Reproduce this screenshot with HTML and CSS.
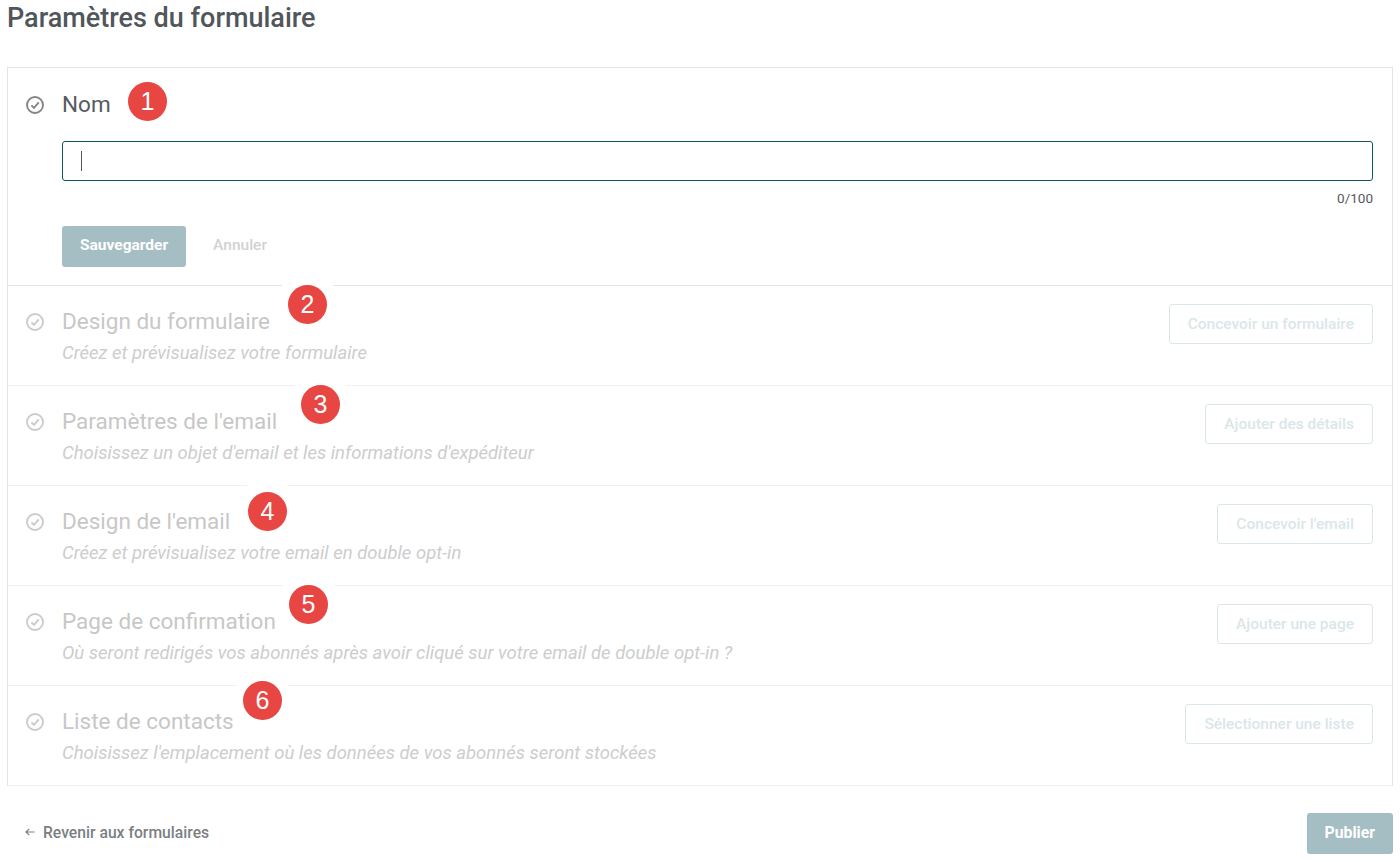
FILE: index.html
```html
<!DOCTYPE html>
<html lang="fr">
<head>
    <meta charset="UTF-8">
    <meta name="viewport" content="width=device-width, initial-scale=1.0">
    <title>Paramètres du formulaire</title>
    <link rel="stylesheet" href="styles.css">
</head>
<body>
    <h1 class="page-title">Paramètres du formulaire</h1>

    <div class="panel">
        <!-- Section ouverte -->
        <div class="section section-open">
            <div class="section-head">
                <svg class="check" viewBox="0 0 18 18"><circle cx="9" cy="9" r="8"/><path d="M5.4 9.3l2.6 2.6 4.8-5.6"/></svg>
                <h2 class="section-title">Nom</h2>
            </div>
            <div class="field">
                <div class="input"><span class="caret"></span></div>
                <div class="counter">0/100</div>
            </div>
            <div class="actions">
                <button class="button button-primary">Sauvegarder</button>
                <button class="button button-link">Annuler</button>
            </div>
            <span class="badge badge-1"><span class="badge-dot">1</span></span>
        </div>

        <!-- Sections inactives -->
        <div class="section section-off">
            <svg class="check" viewBox="0 0 18 18"><circle cx="9" cy="9" r="8"/><path d="M5.4 9.3l2.6 2.6 4.8-5.6"/></svg>
            <div class="section-text">
                <h2 class="section-title">Design du formulaire</h2>
                <p class="section-sub">Créez et prévisualisez votre formulaire</p>
            </div>
            <button class="button button-outline">Concevoir un formulaire</button>
            <span class="badge badge-2"><span class="badge-dot">2</span></span>
        </div>
        <div class="section section-off">
            <svg class="check" viewBox="0 0 18 18"><circle cx="9" cy="9" r="8"/><path d="M5.4 9.3l2.6 2.6 4.8-5.6"/></svg>
            <div class="section-text">
                <h2 class="section-title">Paramètres de l'email</h2>
                <p class="section-sub">Choisissez un objet d'email et les informations d'expéditeur</p>
            </div>
            <button class="button button-outline">Ajouter des détails</button>
            <span class="badge badge-3"><span class="badge-dot">3</span></span>
        </div>
        <div class="section section-off">
            <svg class="check" viewBox="0 0 18 18"><circle cx="9" cy="9" r="8"/><path d="M5.4 9.3l2.6 2.6 4.8-5.6"/></svg>
            <div class="section-text">
                <h2 class="section-title">Design de l'email</h2>
                <p class="section-sub">Créez et prévisualisez votre email en double opt-in</p>
            </div>
            <button class="button button-outline">Concevoir l'email</button>
            <span class="badge badge-4"><span class="badge-dot">4</span></span>
        </div>
        <div class="section section-off">
            <svg class="check" viewBox="0 0 18 18"><circle cx="9" cy="9" r="8"/><path d="M5.4 9.3l2.6 2.6 4.8-5.6"/></svg>
            <div class="section-text">
                <h2 class="section-title">Page de confirmation</h2>
                <p class="section-sub">Où seront redirigés vos abonnés après avoir cliqué sur votre email de double opt-in ?</p>
            </div>
            <button class="button button-outline">Ajouter une page</button>
            <span class="badge badge-5"><span class="badge-dot">5</span></span>
        </div>
        <div class="section section-off">
            <svg class="check" viewBox="0 0 18 18"><circle cx="9" cy="9" r="8"/><path d="M5.4 9.3l2.6 2.6 4.8-5.6"/></svg>
            <div class="section-text">
                <h2 class="section-title">Liste de contacts</h2>
                <p class="section-sub">Choisissez l'emplacement où les données de vos abonnés seront stockées</p>
            </div>
            <button class="button button-outline">Sélectionner une liste</button>
            <span class="badge badge-6"><span class="badge-dot">6</span></span>
        </div>
    </div>

    <div class="footer">
        <a class="back-link">
            <svg class="back-arrow" viewBox="0 0 10 10"><path d="M9.5 5H1M4.2 1.9L1 5l3.2 3.1"/></svg>
            Revenir aux formulaires
        </a>
        <button class="button button-primary">Publier</button>
    </div>
</body>
</html>
```

FILE: styles.css
```css
* {
    box-sizing: border-box;
}
body {
    margin: 0;
    padding: 0 7px;
    font-family: Roboto, "Liberation Sans", sans-serif;
    color: #51565a;
    background-color: #fff;
}
.page-title {
    margin: 0;
    height: 67px;
    padding-top: 1px;
    font-size: 27px;
    line-height: 34px;
    font-weight: 500;
    color: #50565a;
}
.panel {
    border: 1px solid #e4e4e4;
    border-bottom: none;
}
.section {
    position: relative;
    border-bottom: 1px solid #e8e8e8;
}
.section-open {
    height: 218px;
    padding: 18px 19px 0 18px;
    border-bottom-color: #e4e4e4;
}
.section-off {
    display: flex;
    align-items: flex-start;
    height: 100px;
    padding: 17px 19px 0 18px;
    border-bottom-color: #f0f0f0;
}
.section-head {
    display: flex;
    align-items: center;
    height: 36px;
}
.check {
    flex: none;
    width: 18px;
    height: 18px;
    margin: 1px 18px 0 0;
    fill: none;
    stroke: #858585;
    stroke-width: 1.9;
}
.section-off .check {
    margin-top: 10px;
    stroke: #cbcbcb;
}
.section-title {
    margin: 0;
    font-size: 22.5px;
    line-height: 36px;
    font-weight: 400;
    color: #575b5e;
}
.section-off .section-title {
    color: #c7c7c7;
}
.section-text {
    flex: 1;
}
.section-sub {
    margin: 1px 0 0;
    font-size: 18.5px;
    line-height: 26px;
    font-style: italic;
    color: #cdcdcd;
}
.section-off .button-outline {
    margin-top: 1px;
}
.field {
    margin: 19px 0 0 36px;
}
.input {
    height: 40px;
    padding: 9px 18px;
    border: 1px solid #12565f;
    border-radius: 3px;
}
.caret {
    display: block;
    width: 1px;
    height: 20px;
    background-color: #51565a;
}
.counter {
    margin-top: 9px;
    font-size: 13.5px;
    line-height: 16px;
    text-align: right;
    color: #55595c;
}
.actions {
    display: flex;
    align-items: center;
    margin: 20px 0 0 36px;
}
.button {
    height: 41px;
    padding: 0 18px 3px;
    border: none;
    border-radius: 3px;
    font-family: inherit;
    font-size: 15.5px;
    font-weight: 500;
    background: none;
    cursor: pointer;
}
.button-primary {
    background-color: #a5bec3;
    color: #fff;
    font-weight: 700;
}
.button-link {
    margin-left: 9px;
    color: #d2d2d2;
}
.button-outline {
    flex: none;
    height: 40px;
    padding-bottom: 0;
    border: 1px solid #dbe6e8;
    color: #dbe6e8;
}

/* Pastilles numerotees, par-dessus le contenu, sur un fond blanc qui coupe les lignes */
.badge {
    position: absolute;
    display: flex;
    align-items: center;
    justify-content: center;
    width: 51px;
    height: 53px;
    border-radius: 8px;
    background-color: #fff;
}
.badge-dot {
    display: flex;
    align-items: center;
    justify-content: center;
    width: 39px;
    height: 39px;
    border-radius: 50%;
    font-family: "Liberation Sans", Arial, sans-serif;
    font-size: 25px;
    color: #fff;
    background-color: #e84642;
}
.badge-1 { left: 114px; top: 7px; }
.badge-2 { left: 274px; top: -8px; }
.badge-3 { left: 287px; top: -8px; }
.badge-4 { left: 234px; top: -1px; }
.badge-5 { left: 275px; top: -8px; }
.badge-6 { left: 229px; top: -12px; }

.footer {
    display: flex;
    align-items: center;
    justify-content: space-between;
    margin-top: 27px;
    padding-left: 18px;
}
.back-link {
    display: flex;
    align-items: center;
    padding-bottom: 3px;
    font-size: 15.7px;
    font-weight: 500;
    color: #7c7f82;
}
.back-arrow {
    width: 10px;
    height: 10px;
    margin-right: 8px;
    fill: none;
    stroke: #7c7f82;
    stroke-width: 1.2;
}
.footer .button-primary {
    font-size: 15.75px;
}
```
